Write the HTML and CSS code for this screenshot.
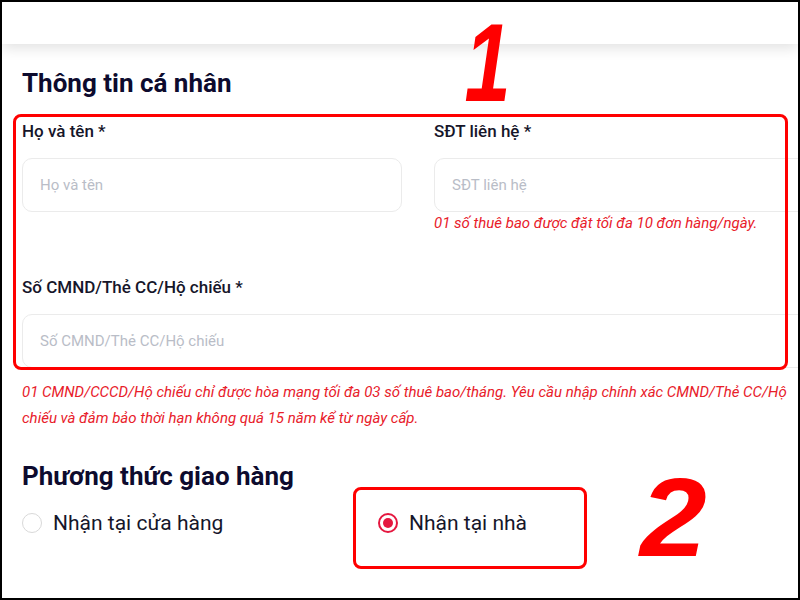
FILE: index.html
```html
<!DOCTYPE html>
<html lang="vi">
<head>
<meta charset="utf-8">
<title>Thông tin cá nhân</title>
<link rel="stylesheet" href="styles.css">
</head>
<body>
<div class="frame">
  <header class="topbar"></header>
  <main class="content">
    <h2 class="section-title">Thông tin cá nhân</h2>
    <div class="fields">
      <div class="field">
        <label class="field-label">Họ và tên *</label>
        <input class="field-input" type="text" placeholder="Họ và tên">
      </div>
      <div class="field">
        <label class="field-label">SĐT liên hệ *</label>
        <input class="field-input" type="text" placeholder="SĐT liên hệ">
        <p class="hint">01 số thuê bao được đặt tối đa 10 đơn hàng/ngày.</p>
      </div>
      <div class="field field-full">
        <label class="field-label">Số CMND/Thẻ CC/Hộ chiếu *</label>
        <input class="field-input" type="text" placeholder="Số CMND/Thẻ CC/Hộ chiếu">
      </div>
    </div>
    <p class="note">01 CMND/CCCD/Hộ chiếu chỉ được hòa mạng tối đa 03 số thuê bao/tháng. Yêu cầu nhập chính xác CMND/Thẻ CC/Hộ chiếu và đảm bảo thời hạn không quá 15 năm kể từ ngày cấp.</p>
    <h2 class="section-title delivery-title">Phương thức giao hàng</h2>
    <div class="options">
      <div class="option"><span class="radio"></span><span class="option-text">Nhận tại cửa hàng</span></div>
      <div class="option"><span class="radio radio-checked"></span><span class="option-text">Nhận tại nhà</span></div>
    </div>
  </main>
  <div class="mark mark-box-1"></div>
  <div class="mark mark-box-2"></div>
  <div class="mark-num mark-num-1">1</div>
  <div class="mark-num mark-num-2">2</div>
</div>
</body>
</html>
```

FILE: styles.css
```css
* { box-sizing: border-box; }
html, body { margin: 0; padding: 0; background: #fff; }
body { font-family: Roboto, "Noto Sans", "Liberation Sans", sans-serif; }

.frame {
  position: relative;
  width: 800px;
  height: 600px;
  border: 2px solid #000;
  overflow: hidden;
  background: #fff;
}

.topbar {
  height: 42px;
  background: #fff;
  box-shadow: 0 4px 14px rgba(0, 0, 0, 0.12);
  position: relative;
}

.content {
  width: 812px;
  padding-left: 20px;
}

.section-title {
  margin: 23px 0 0;
  font-size: 26px;
  line-height: 32px;
  font-weight: 700;
  color: #0d0b2e;
}

.fields {
  margin-top: 21px;
  display: grid;
  grid-template-columns: 380px 380px;
  column-gap: 32px;
  row-gap: 43px;
  align-items: start;
}

.field { display: flex; flex-direction: column; }
.field-full { grid-column: 1 / -1; }

.field-label {
  font-size: 17px;
  line-height: 22px;
  font-weight: 500;
  color: #16162a;
  margin-bottom: 16px;
}

.field-input {
  height: 54px;
  border: 1px solid #ebebeb;
  border-radius: 10px;
  padding: 0 17px;
  font-family: Roboto, "Noto Sans", sans-serif;
  font-size: 15px;
  color: #16162a;
  background: #fff;
  outline: none;
}
.field-input::placeholder { color: #b9bdc7; }

.hint, .note {
  font-style: italic;
  font-size: 15px;
  color: #e8202a;
  margin: 0;
}
.hint { margin-top: 1px; line-height: 20px; }
.note { margin-top: 11px; line-height: 26px; }

.delivery-title { margin-top: 29px; }

.options {
  margin-top: 16px;
  display: grid;
  grid-template-columns: 356px 1fr;
}
.option {
  display: flex;
  align-items: center;
  gap: 11px;
  height: 30px;
}
.option-text {
  font-size: 21px;
  line-height: 30px;
  color: #16162a;
}
.radio {
  width: 20px;
  height: 20px;
  border-radius: 50%;
  border: 1.5px solid #d9d9d9;
  display: flex;
  align-items: center;
  justify-content: center;
  flex: none;
}
.radio-checked { border: 2px solid #e5173f; }
.radio-checked::after {
  content: "";
  width: 10px;
  height: 10px;
  border-radius: 50%;
  background: #e5173f;
}

/* annotation overlays */
.mark {
  position: absolute;
  border: 3px solid #ff0000;
  border-radius: 8px;
}
.mark-box-1 { left: 11px; top: 112px; width: 775px; height: 256px; }
.mark-box-2 { left: 351px; top: 485px; width: 234px; height: 82px; }

.mark-num {
  position: absolute;
  font-family: "Liberation Sans", Arial, sans-serif;
  font-weight: 700;
  font-style: italic;
  font-size: 112px;
  line-height: 80px;
  color: #ff0000;
}
.mark-num-1 {
  left: 447px;
  top: 21px;
  transform: scaleX(0.74);
  transform-origin: 60px 50%;
}
.mark-num-2 {
  left: 638px;
  top: 476px;
  transform: scaleX(1.07);
  transform-origin: 0 50%;
}
```
